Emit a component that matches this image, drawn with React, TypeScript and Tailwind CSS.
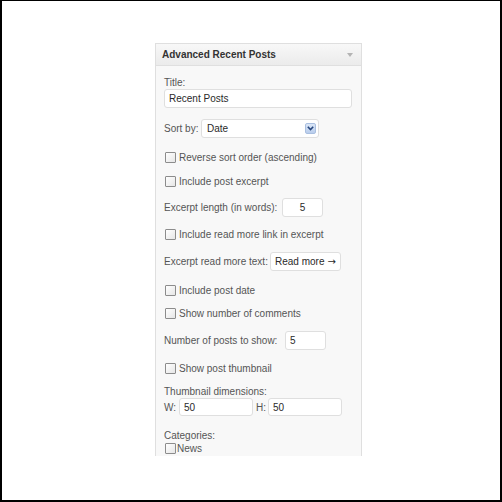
import React from "react";

function Checkbox() {
  return (
    <span className="inline-block shrink-0 w-[11px] h-[11px] border border-[#8c8c8c] rounded-[1px] bg-linear-to-br from-[#ffffff] to-[#e6e6e6]" />
  );
}

function CheckRow({ label, mt, gap = "ml-[3px]" }: { label: string; mt: string; gap?: string }) {
  return (
    <div className={`${mt} h-[13px] flex items-center pl-[1px]`}>
      <Checkbox />
      <span className={`${gap} whitespace-nowrap`}>{label}</span>
    </div>
  );
}

function Field({ w, children, center = false, h = "h-[19px]" }: { w: string; children: React.ReactNode; center?: boolean; h?: string }) {
  return (
    <div
      className={`${w} ${h} shrink-0 border border-[#dfdfdf] rounded-[3px] bg-white flex items-center text-[#2a2a2a] text-[10px] whitespace-nowrap overflow-hidden ${
        center ? "justify-center" : "pl-[4px]"
      }`}
    >
      {children}
    </div>
  );
}

export default function App() {
  return (
    <div className="w-[502px] h-[502px] bg-white border-t border-l-2 border-r-2 border-b-2 border-black font-['Liberation_Sans',Arial,sans-serif] text-[10px] leading-[13px] text-[#555]">
      <div className="ml-[153px] mt-[42px] w-[207px] h-[413px] border-x border-t border-[#dfdfdf] bg-[#f8f8f8] overflow-hidden">
        <div className="h-[22px] flex items-center justify-between border-b border-[#dfdfdf] bg-linear-to-b from-[#f8f8f8] to-[#ebebeb] pl-[6px] pr-[8px]">
          <span className="font-bold text-[#333]">Advanced Recent Posts</span>
          <svg width="6" height="4" viewBox="0 0 6 4">
            <path d="M0 0 L6 0 L3 4 Z" fill="#b4b4b4" />
          </svg>
        </div>
        <div className="pt-[10px] pl-[8px] pr-[9px]">
          <div className="h-[13px]">Title:</div>
          <Field w="w-full">Recent Posts</Field>

          <div className="mt-[11px] h-[19px] flex items-center">
            <span className="w-[37px] shrink-0 whitespace-nowrap">Sort by:</span>
            <div className="relative w-[118px] h-[19px] border border-[#dfdfdf] rounded-[3px] bg-white flex items-center pl-[5px] text-[#2a2a2a] text-[10px]">
              Date
              <span className="absolute right-[2px] top-[3px] w-[11px] h-[11px] rounded-[2px] border border-[#a9bfe0] bg-linear-to-b from-[#dce7f7] to-[#b9cdec] flex items-center justify-center">
                <svg width="7" height="5" viewBox="0 0 7 5">
                  <path d="M0.8 0.8 L3.5 3.6 L6.2 0.8" fill="none" stroke="#27467c" strokeWidth="1.6" />
                </svg>
              </span>
            </div>
          </div>

          <CheckRow mt="mt-[13px]" label="Reverse sort order (ascending)" />
          <CheckRow mt="mt-[11px]" label="Include post excerpt" />

          <div className="mt-[10px] h-[19px] flex items-center">
            <span className="w-[118px] shrink-0 whitespace-nowrap">Excerpt length (in words):</span>
            <Field w="w-[41px]" center>
              5
            </Field>
          </div>

          <CheckRow mt="mt-[11px]" label="Include read more link in excerpt" />

          <div className="mt-[11px] h-[19px] flex items-center">
            <span className="w-[106px] shrink-0 whitespace-nowrap">Excerpt read more text:</span>
            <Field w="w-[71px]">
              Read more
              <span className="ml-[3px] font-['DejaVu_Sans',sans-serif] text-[10px]">→</span>
            </Field>
          </div>

          <CheckRow mt="mt-[13px]" label="Include post date" />
          <CheckRow mt="mt-[10px]" label="Show number of comments" />

          <div className="mt-[11px] h-[19px] flex items-center">
            <span className="w-[121px] shrink-0 whitespace-nowrap">Number of posts to show:</span>
            <Field w="w-[41px]">5</Field>
          </div>

          <CheckRow mt="mt-[12px]" label="Show post thumbnail" />

          <div className="mt-[10px] h-[13px]">Thumbnail dimensions:</div>
          <div className="h-[18px] flex items-center">
            <span className="w-[15px] shrink-0">W:</span>
            <Field w="w-[74px]" h="h-[18px]">50</Field>
            <span className="w-[15px] shrink-0 pl-[3px]">H:</span>
            <Field w="w-[74px]" h="h-[18px]">50</Field>
          </div>

          <div className="mt-[13px] h-[13px]">Categories:</div>
          <div className="mt-[1px] h-[11px] flex items-center pl-[1px]">
            <Checkbox />
            <span className="ml-[1px]">News</span>
          </div>
        </div>
      </div>
    </div>
  );
}
